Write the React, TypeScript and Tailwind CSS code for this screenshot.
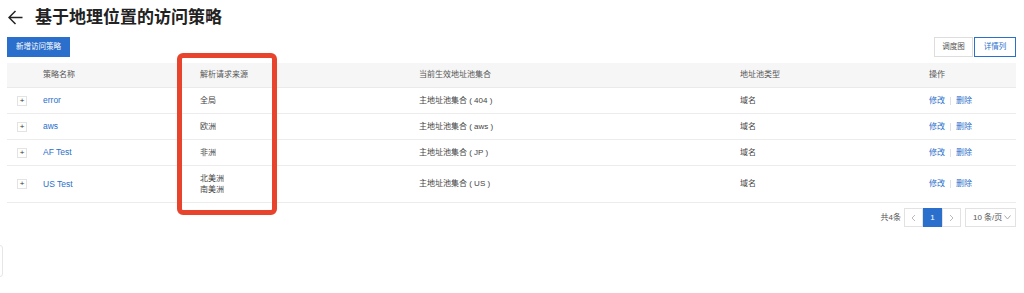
import React from "react";

const rows = [
  { name: "error", src: ["全局"], pool: "主地址池集合 ( 404 )", h: "h-[26px]" },
  { name: "aws", src: ["欧洲"], pool: "主地址池集合 ( aws )", h: "h-[26px]" },
  { name: "AF Test", src: ["非洲"], pool: "主地址池集合 ( JP )", h: "h-[26px]" },
  { name: "US Test", src: ["北美洲", "南美洲"], pool: "主地址池集合 ( US )", h: "h-[37px]" },
];

const grid = "grid grid-cols-[36px_157px_219px_321px_189px_87px]";

export default function App() {
  return (
    <div
      className="relative w-[1024px] h-[293px] bg-white overflow-hidden text-[#333]"
      style={{ fontFamily: '"Liberation Sans", "Noto Sans CJK SC", sans-serif' }}
    >
      {/* title */}
      <div className="flex items-center h-[34px] pl-[8px] pt-[1px]">
        <svg width="15" height="15" viewBox="0 0 15 15" className="mr-[12px]">
          <path d="M7.5 1 L1 7.5 L7.5 14 M1 7.5 H14.5" stroke="#222" strokeWidth="1.5" fill="none" />
        </svg>
        <h1 className="text-[17px] font-bold text-[#222] leading-none">基于地理位置的访问策略</h1>
      </div>
      {/* toolbar */}
      <div className="flex items-center justify-between pl-[7px] pr-[8px] mt-[3px] h-[20px]">
        <button className="h-[20px] w-[63px] bg-[#2a6fcb] text-white text-[7.5px] flex items-center justify-center">新增访问策略</button>
        <div className="flex gap-[1px]">
          <button className="h-[20px] w-[39px] border border-[#ddd] text-[7.5px] text-[#555] flex items-center justify-center">调度图</button>
          <button className="h-[20px] w-[42px] border border-[#2a6fcb] text-[7.5px] text-[#2a6fcb] flex items-center justify-center">详情列</button>
        </div>
      </div>
      {/* table */}
      <div className="ml-[7px] w-[1009px] mt-[6px] text-[8px]">
        <div className={`${grid} h-[25px] items-center bg-[#f6f6f6] border-b border-[#eaeaea] text-[#555]`}>
          <div />
          <div>策略名称</div>
          <div>解析请求来源</div>
          <div>当前生效地址池集合</div>
          <div>地址池类型</div>
          <div>操作</div>
        </div>
        {rows.map((r) => (
          <div key={r.name} className={`${grid} ${r.h} items-center border-b border-[#ececec]`}>
            <div className="pl-[10px]">
              <div className="w-[10px] h-[10px] border border-[#e3e3e3] flex items-center justify-center text-[8px] leading-none text-[#333]">+</div>
            </div>
            <div className="text-[#2a6fcb] text-[8.5px]">{r.name}</div>
            <div className="flex flex-col leading-[11px] text-[#444]">
              {r.src.map((s) => (
                <span key={s}>{s}</span>
              ))}
            </div>
            <div className="text-[#444]">{r.pool}</div>
            <div className="text-[#444]">域名</div>
            <div className="flex items-center text-[#2a6fcb]">
              <span>修改</span>
              <span className="mx-[5px] w-px h-[8px] bg-[#e0e0e0]" />
              <span>删除</span>
            </div>
          </div>
        ))}
      </div>
      {/* pagination */}
      <div className="flex items-center justify-end pr-[8px] mt-[5px] text-[8px] text-[#555]">
        <span className="mr-[3px]">共4条</span>
        <div className="flex">
          <div className="w-[19px] h-[19px] border border-[#e2e2e2] flex items-center justify-center text-[#bbb]">
            <svg width="5" height="8" viewBox="0 0 5 8"><path d="M4 1 L1 4 L4 7" stroke="#bbb" fill="none" /></svg>
          </div>
          <div className="w-[19px] h-[19px] bg-[#2a6fcb] text-white flex items-center justify-center">1</div>
          <div className="w-[19px] h-[19px] border border-[#e2e2e2] flex items-center justify-center">
            <svg width="5" height="8" viewBox="0 0 5 8"><path d="M1 1 L4 4 L1 7" stroke="#bbb" fill="none" /></svg>
          </div>
        </div>
        <div className="ml-[4px] w-[51px] h-[19px] border border-[#e2e2e2] flex items-center pl-[7px] gap-[2px]">
          <span>10 条/页</span>
          <svg width="7" height="5" viewBox="0 0 7 5"><path d="M0.5 0.5 L3.5 4 L6.5 0.5" stroke="#aaa" fill="none" /></svg>
        </div>
      </div>
      {/* red highlight box */}
      <div className="absolute left-[177px] top-[53px] w-[100px] h-[162px] border-[5px] border-[#e8432c] rounded-[6px]" />
      {/* side tab */}
      <div className="absolute left-[-6px] top-[245px] w-[9px] h-[32px] border border-[#e6e6e6] rounded-[3px] bg-white" />
    </div>
  );
}
